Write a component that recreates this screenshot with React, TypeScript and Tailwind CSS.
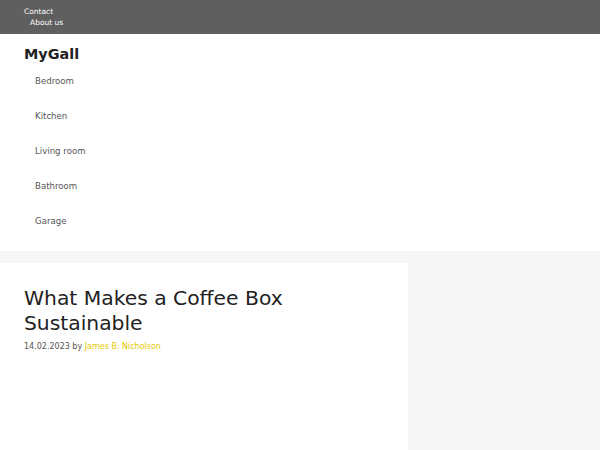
export default function App() {
  const nav = ["Bedroom", "Kitchen", "Living room", "Bathroom", "Garage"];
  return (
    <div className="min-h-[450px] bg-[#f7f6f5] font-['DejaVu_Sans',sans-serif]">
      <div className="h-[34px] bg-[#5f5f5f] pl-[24px] pt-[6px] text-[7.5px] leading-[11px] text-white">
        <div>Contact</div>
        <div className="pl-[6px]">About us</div>
      </div>
      <header className="bg-white pt-[11px] pb-[11.5px] pl-[24px]">
        <div className="text-[14.4px] font-bold leading-[18px] text-[#222]">MyGall</div>
        <nav className="flex flex-col pl-[11px] pt-[1px]">
          {nav.map((n) => (
            <div key={n} className="h-[35px] flex items-center text-[8.6px] text-[#555]">
              {n}
            </div>
          ))}
        </nav>
      </header>
      <div className="mt-[12px] flex">
        <article className="w-[408px] bg-white pl-[24px] pt-[23.5px] h-[188px]">
          <h1 className="text-[20.3px] leading-[25px] text-[#222] font-normal">
            What Makes a Coffee Box
            <br />
            Sustainable
          </h1>
          <div className="mt-[4.5px] text-[8px] leading-[12px] text-[#555]">
            14.02.2023 by <span className="text-[#e3c800]">James B. Nicholson</span>
          </div>
        </article>
        <aside className="flex-1" />
      </div>
    </div>
  );
}
